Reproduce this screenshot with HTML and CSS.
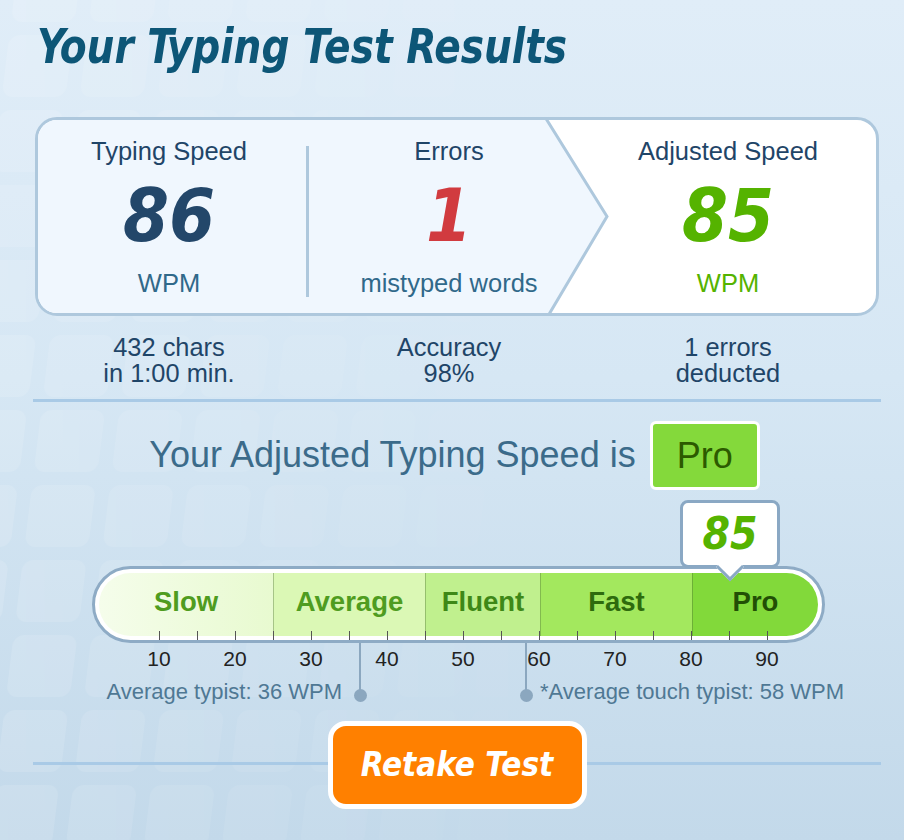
FILE: index.html
```html
<!DOCTYPE html>
<html lang="en">
<head>
<meta charset="utf-8">
<title>Your Typing Test Results</title>
<link rel="stylesheet" href="styles.css">
</head>
<body>
<div class="page">
  <h1 class="title">Your Typing Test Results</h1>

  <div class="card">
    <svg class="card-bg" viewBox="0 0 838 193" preserveAspectRatio="none" aria-hidden="true">
      <polygon points="0,0 508,0 569,96.5 511,193 0,193" fill="#f0f7fe"/>
      <polyline points="507,-3 569,96.5 510,196" fill="none" stroke="#aec8dd" stroke-width="3"/>
    </svg>
    <div class="col col-1">
      <div class="label">Typing Speed</div>
      <div class="big big-dark">86</div>
      <div class="unit">WPM</div>
    </div>
    <div class="vdiv"></div>
    <div class="col col-2">
      <div class="label">Errors</div>
      <div class="big big-red">1</div>
      <div class="unit">mistyped words</div>
    </div>
    <div class="col col-3">
      <div class="label">Adjusted Speed</div>
      <div class="big big-green">85</div>
      <div class="unit unit-green">WPM</div>
    </div>
  </div>

  <div class="stats">
    <div>432 chars<br>in 1:00 min.</div>
    <div>Accuracy<br>98%</div>
    <div>1 errors<br>deducted</div>
  </div>

  <div class="rule"></div>

  <div class="verdict">
    <span class="verdict-text">Your Adjusted Typing Speed is</span>
    <span class="badge">Pro</span>
  </div>

  <div class="scale">
    <div class="bubble">85</div>
    <div class="bar">
      <div class="track">
        <div class="seg seg-slow">Slow</div>
        <div class="seg seg-avg">Average</div>
        <div class="seg seg-fluent">Fluent</div>
        <div class="seg seg-fast">Fast</div>
        <div class="seg seg-pro">Pro</div>
      </div>
      <div class="ticks">
        <span></span><span></span><span></span><span></span>
        <span></span><span></span><span></span><span></span>
        <span></span><span></span><span></span><span></span>
        <span></span><span></span><span></span><span></span>
        <span class="last"></span>
      </div>
    </div>
    <div class="axis">
      <span>10</span><span>20</span><span>30</span><span>40</span><span>50</span><span>60</span><span>70</span><span>80</span><span>90</span>
    </div>
    <div class="notes">
      <span class="note-left">Average typist: 36 WPM</span>
      <span class="note-right">*Average touch typist: 58 WPM</span>
    </div>
    <div class="marker marker-avg"></div>
    <div class="marker marker-touch"></div>
  </div>

  <div class="retake">
    <button class="btn" type="button">Retake Test</button>
  </div>
</div>
</body>
</html>
```

FILE: styles.css
```css
html, body {
  margin: 0;
  padding: 0;
}

body {
  background: #d3e5f2;
  font-family: "Liberation Sans", Arial, Helvetica, sans-serif;
}

.page {
  width: 904px;
  height: 840px;
  box-sizing: border-box;
  padding: 19px 24px 0 34px;
  overflow: hidden;
  background:
    url("data:image/svg+xml,<svg xmlns='http://www.w3.org/2000/svg' width='904' height='840'><defs><linearGradient id='g' x1='0' x2='1' y1='0' y2='0'><stop offset='0' stop-color='white' stop-opacity='1'/><stop offset='0.65' stop-color='white' stop-opacity='0'/></linearGradient><mask id='m'><rect width='904' height='840' fill='url(%23g)'/></mask><pattern id='k' width='78' height='75' patternUnits='userSpaceOnUse' patternTransform='translate(4 29) skewX(-7)'><rect x='6' y='6' width='64' height='62' rx='11' fill='white' fill-opacity='0.13'/></pattern></defs><rect width='904' height='840' fill='url(%23k)' mask='url(%23m)'/></svg>") no-repeat 0 0,
    linear-gradient(180deg, #e0edf8 0%, #d6e7f4 45%, #c3d9ea 100%);
}

/* Title */
.title {
  margin: 0 0 0 3px;
  width: max-content;
  font-family: "DejaVu Sans Condensed", "DejaVu Sans", sans-serif;
  font-stretch: condensed;
  font-style: italic;
  font-weight: 700;
  font-size: 47.6px;
  line-height: 56px;
  color: #0d5677;
  white-space: nowrap;
  transform: scaleX(0.913);
  transform-origin: left center;
}

/* Result card */
.card {
  position: relative;
  margin: 42px 1px 0;
  height: 199px;
  box-sizing: border-box;
  border: 3px solid #aec8dd;
  border-radius: 22px;
  background: #ffffff;
  overflow: hidden;
  display: grid;
  grid-template-columns: 268px 3px 280px 1fr;
}

.card-bg {
  position: absolute;
  left: 0;
  top: 0;
  width: 838px;
  height: 193px;
}

.col {
  position: relative;
  text-align: center;
  padding-top: 16px;
}

.col-1 { padding-right: 6px; }
.col-3 { padding-right: 9px; }

.vdiv {
  position: relative;
  background: #aec8dd;
  margin: 26px 0 16px;
}

.label {
  font-size: 25.5px;
  line-height: 30px;
  color: #1f4568;
}

.big {
  margin-top: 20px;
  font-family: "DejaVu Sans Condensed", "DejaVu Sans", sans-serif;
  font-stretch: condensed;
  font-style: italic;
  font-weight: 700;
  font-size: 73.6px;
  line-height: 60px;
}

.big-dark { color: #23476a; }
.big-red { color: #d13b3f; }
.big-green { color: #55b300; }

.unit {
  margin-top: 22px;
  font-size: 25.5px;
  line-height: 30px;
  color: #30698a;
}

.unit-green { color: #55b300; }

/* Stats */
.stats {
  display: grid;
  grid-template-columns: 262px 298px 260px;
  margin: 18px 0 0 4px;
  text-align: center;
  font-size: 25.4px;
  line-height: 26px;
  color: #1f4568;
}

.rule {
  height: 3px;
  margin: 13px -1px 0;
  background: #a9cae6;
}

/* Verdict */
.verdict {
  display: flex;
  justify-content: center;
  align-items: center;
  gap: 14px;
  height: 70px;
  margin-top: 18px;
  padding-right: 5px;
}

.verdict-text {
  font-size: 36px;
  line-height: 40px;
  color: #3b6b8a;
}

.badge {
  border: 3.5px solid #ffffff;
  border-radius: 6px;
  background: #84d93b;
  color: #2c5a00;
  padding: 0 24px;
  font-size: 36px;
  line-height: 63px;
}

/* Scale */
.scale {
  position: relative;
  padding-top: 76px;
}

.bubble {
  position: absolute;
  left: 646px;
  top: 10px;
  z-index: 3;
  width: 100px;
  height: 68px;
  box-sizing: border-box;
  border: 3px solid #8aa8c4;
  border-radius: 8px;
  background: #ffffff;
  text-align: center;
  font-family: "DejaVu Sans Condensed", "DejaVu Sans", sans-serif;
  font-stretch: condensed;
  font-style: italic;
  font-weight: 700;
  font-size: 44px;
  line-height: 62px;
  color: #55b300;
}

.bubble::after {
  content: "";
  position: absolute;
  left: 50%;
  bottom: -11.5px;
  width: 20px;
  height: 20px;
  margin-left: -10px;
  box-sizing: border-box;
  background: #ffffff;
  border-right: 3px solid #8aa8c4;
  border-bottom: 3px solid #8aa8c4;
  transform: rotate(45deg);
}

.bar {
  position: relative;
  margin-left: 58px;
  width: 733px;
  height: 77px;
  box-sizing: border-box;
  border: 3px solid #8eabc5;
  border-radius: 40px;
  background: #ffffff;
  padding: 4px;
}

.track {
  display: flex;
  height: 63px;
  border-radius: 32px;
  overflow: hidden;
}

.seg {
  box-sizing: border-box;
  padding-top: 7px;
  text-align: center;
  font-weight: 700;
  font-size: 27.5px;
  line-height: 44px;
}

.seg + .seg {
  border-left: 1px solid rgba(70, 100, 50, 0.35);
}

.seg-slow {
  width: 174px;
  background: linear-gradient(90deg, #f5fdeb, #e8fad0);
  color: #4f9c20;
}

.seg-avg {
  width: 152px;
  background: #dbf8b5;
  color: #4f9c20;
}

.seg-fluent {
  width: 115px;
  background: #c0f08e;
  color: #3e8817;
}

.seg-fast {
  width: 152px;
  background: #a3e85e;
  color: #2e6b0d;
}

.seg-pro {
  flex: 1;
  background: #82d93a;
  color: #224f05;
}

.ticks {
  position: absolute;
  left: 64px;
  top: 62px;
  display: flex;
}

.ticks span {
  width: 38px;
  height: 9px;
  box-sizing: border-box;
  border-left: 1px solid #555555;
}

.ticks span.last {
  width: 1px;
}

.axis {
  display: flex;
  margin: 4px 0 0 87px;
}

.axis span {
  width: 76px;
  text-align: center;
  font-size: 21px;
  line-height: 24px;
  color: #222222;
}

.notes {
  display: flex;
  margin-top: 9px;
  font-size: 22px;
  line-height: 24px;
  color: #4f7894;
  white-space: nowrap;
}

.note-left {
  width: 308px;
  text-align: right;
}

.note-right {
  margin-left: 198px;
}

.marker {
  position: absolute;
  top: 153px;
  width: 2px;
  height: 52px;
  background: #8ba7bf;
}

.marker::after {
  content: "";
  position: absolute;
  left: -5.5px;
  bottom: -6.5px;
  width: 13px;
  height: 13px;
  border-radius: 50%;
  background: #8ba7bf;
}

.marker-avg { left: 325px; }
.marker-touch { left: 491px; }

/* Retake */
.retake {
  display: flex;
  align-items: center;
  margin-top: 17px;
}

.retake::before,
.retake::after {
  content: "";
  flex: 1;
  height: 3px;
  margin-bottom: 3px;
  background: #a9cae6;
}

.retake::before { margin-left: -1px; }
.retake::after { margin-right: -1px; }

.btn {
  width: 259px;
  height: 88px;
  box-sizing: border-box;
  padding: 0;
  border: 5px solid #ffffff;
  border-radius: 18px;
  background: #ff8000;
  color: #ffffff;
  text-align: center;
  font-family: "DejaVu Sans Condensed", "DejaVu Sans", sans-serif;
  font-stretch: condensed;
  font-style: italic;
  font-weight: 700;
  font-size: 33px;
  line-height: 78px;
  cursor: pointer;
}
```
